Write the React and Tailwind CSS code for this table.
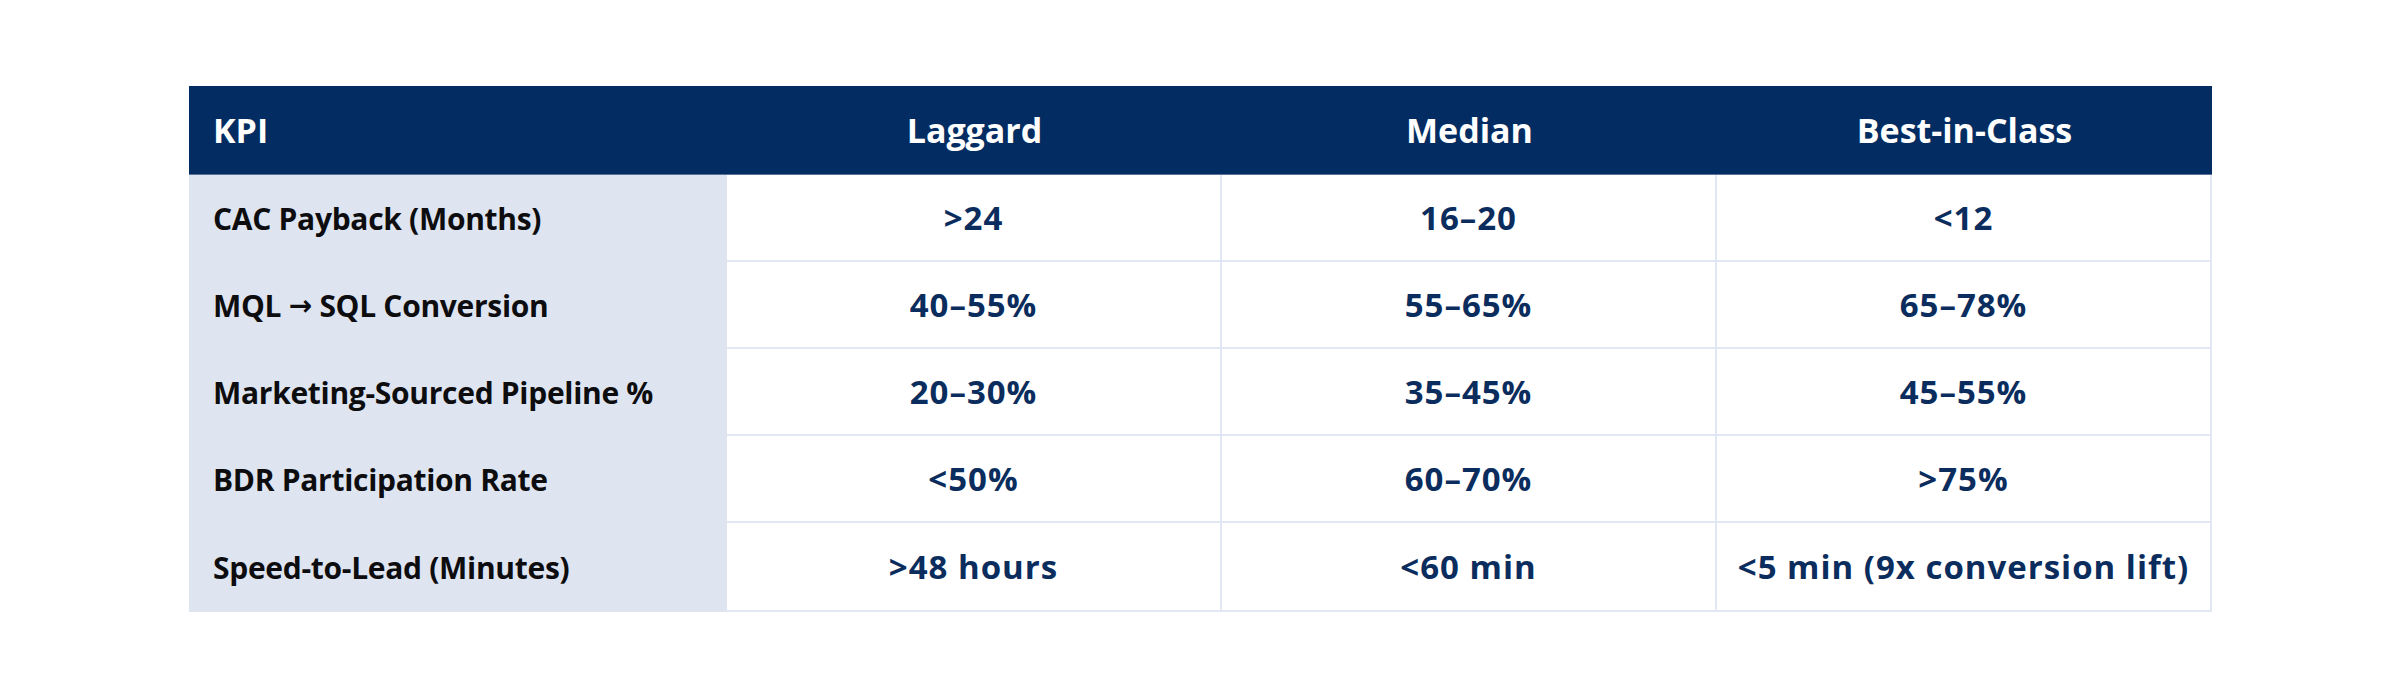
import React from "react";

const rows = [
  { kpi: "CAC Payback (Months)", laggard: ">24", median: "16–20", best: "<12" },
  { kpi: "MQL → SQL Conversion", laggard: "40–55%", median: "55–65%", best: "65–78%" },
  { kpi: "Marketing-Sourced Pipeline %", laggard: "20–30%", median: "35–45%", best: "45–55%" },
  { kpi: "BDR Participation Rate", laggard: "<50%", median: "60–70%", best: ">75%" },
  { kpi: "Speed-to-Lead (Minutes)", laggard: ">48 hours", median: "<60 min", best: "<5 min (9x conversion lift)" },
];

const font = { fontFamily: '"Open Sans", "Liberation Sans", sans-serif' };

const KpiLabel = ({ text }) => {
  if (!text.includes("→")) return text;
  const [a, b] = text.split("→");
  return (
    <>
      {a}
      <span className="font-['DejaVu_Sans'] text-[28px] font-bold">→</span>
      {b}
    </>
  );
};

const App = () => {
  return (
    <div className="w-[2400px] h-[700px] bg-white pt-[86px] pl-[189px]" style={font}>
      <div className="w-[2023px]">
        <div className="flex h-[89px] bg-[#032d62] text-white text-[34px] font-bold border-b border-[#5a7296]">
          <div className="w-[538px] flex items-center pl-[24px]">KPI</div>
          <div className="flex-1 flex items-center justify-center">Laggard</div>
          <div className="flex-1 flex items-center justify-center">Median</div>
          <div className="flex-1 flex items-center justify-center">Best-in-Class</div>
        </div>
        {rows.map((row, idx) => (
          <div key={idx} className="flex h-[87px]">
            <div className={`w-[538px] flex items-center pl-[24px] bg-[#dee5f0] text-[#0d0d10] text-[30px] font-bold tracking-[-0.01em] whitespace-pre ${idx === rows.length - 1 ? "h-[89px]" : ""}`}>
              <KpiLabel text={row.kpi} />
            </div>
            {[row.laggard, row.median, row.best].map((v, i) => (
              <div
                key={i}
                className={`flex-1 flex items-center justify-center border-r-2 border-b-2 border-[#e1e8f3] text-[#0b2d5e] text-[33px] font-bold tracking-[0.03em] ${idx === rows.length - 1 ? "h-[89px]" : ""}`}
              >
                {v}
              </div>
            ))}
          </div>
        ))}
      </div>
    </div>
  );
};

export default App;
